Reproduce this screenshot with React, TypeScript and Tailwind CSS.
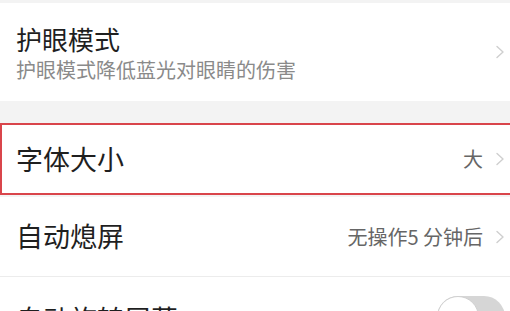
const font = { fontFamily: '"Noto Sans CJK SC", "Noto Sans", sans-serif' };

function Chevron() {
  return (
    <svg width="10" height="14" viewBox="0 0 10 14" className="shrink-0">
      <path d="M2 1.5 L8 7 L2 12.5" fill="none" stroke="#cfcfcf" strokeWidth="1.4" strokeLinecap="round" strokeLinejoin="round" />
    </svg>
  );
}

function Toggle() {
  return (
    <div className="relative h-[42px] w-[68px] rounded-full bg-[#d6d6d6]">
      <div className="absolute left-0 top-0 h-[42px] w-[42px] rounded-full border border-[#d0d0d0] bg-white" />
    </div>
  );
}

export default function App() {
  return (
    <div className="h-[311px] w-full overflow-hidden bg-[#f3f3f3] pt-[3px]" style={font}>
      {/* 护眼模式 */}
      <div className="flex h-[98px] items-center justify-between bg-white pl-4 pr-[5px]">
        <div className="self-start pt-[19px]">
          <div className="text-[26px] leading-[33px] text-[#1f1f1f]">护眼模式</div>
          <div className="text-[20px] leading-[30px] text-[#8a8a8a]">护眼模式降低蓝光对眼睛的伤害</div>
        </div>
        <Chevron />
      </div>

      <div className="h-[22px]" />

      {/* 字体大小 (highlighted) */}
      <div className="flex h-[72px] items-center justify-between border-y-2 border-l-2 border-[#d9454b] bg-white pl-[14px] pr-[5px]">
        <span className="text-[27px] text-[#1f1f1f]">字体大小</span>
        <div className="flex items-center gap-[12px]">
          <span className="text-[20px] text-[#666]">大</span>
          <Chevron />
        </div>
      </div>

      <div className="h-[2px]" />

      {/* 自动熄屏 */}
      <div className="flex h-[80px] items-center justify-between border-b border-[#ececec] bg-white pl-4 pr-[5px]">
        <span className="text-[27px] text-[#1f1f1f]">自动熄屏</span>
        <div className="flex items-center gap-[12px]">
          <span className="text-[20px] text-[#666]">无操作5 分钟后</span>
          <Chevron />
        </div>
      </div>

      {/* 自动旋转屏幕 */}
      <div className="flex h-[80px] items-center justify-between bg-white pl-4 pr-[5px]">
        <span className="pt-[4px] text-[27px] text-[#1f1f1f]">自动旋转屏幕</span>
        <Toggle />
      </div>
    </div>
  );
}
